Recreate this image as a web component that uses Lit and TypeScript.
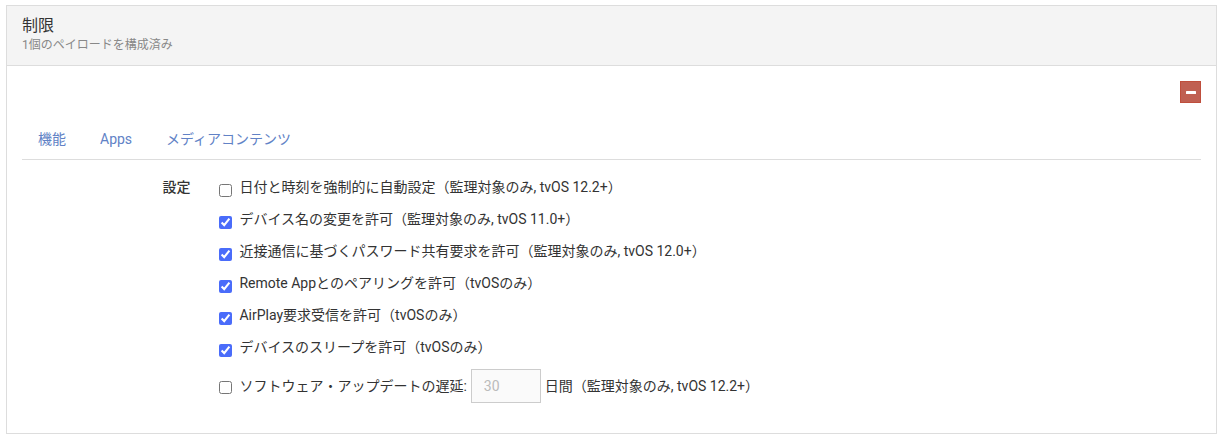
import { LitElement, html, css } from "lit";
import { customElement, state } from "lit/decorators.js";

interface Restriction {
  id: string;
  label: string;
  checked: boolean;
}

@customElement("app-root")
export class AppRoot extends LitElement {
  static styles = css`
    :host {
      display: block;
      padding: 5px 5px 4px 6px;
      color: #333;
      font: 14px/20px Roboto, "Noto Sans CJK JP", sans-serif;
    }
    * {
      box-sizing: border-box;
    }
    .panel {
      border: 1px solid #ddd;
      background: #fff;
    }
    .head {
      padding: 10px 15px 11px;
      background: #f4f4f4;
      border-bottom: 1px solid #ddd;
    }
    .title {
      margin: 0;
      font-size: 16px;
      font-weight: 400;
      line-height: 20px;
    }
    .subtitle {
      margin: 0;
      color: #888;
      font-size: 12px;
      line-height: 18px;
    }
    .body {
      padding: 15px 15px 30px;
    }
    .tools {
      display: flex;
      justify-content: flex-end;
    }
    .remove {
      display: flex;
      align-items: center;
      justify-content: center;
      width: 21px;
      height: 22px;
      padding: 0;
      color: #fff;
      background: #c06052;
      border: 1px solid #bf4e3c;
      cursor: pointer;
    }
    .tabs {
      display: flex;
      gap: 2px;
      margin-top: 16px;
      border-bottom: 1px solid #ddd;
    }
    .tab {
      padding: 10px 16px;
      color: #6182c6;
      text-decoration: none;
    }
    .settings {
      display: flex;
      gap: 29px;
      margin: 0;
      padding-top: 17px;
    }
    .name {
      width: calc(100% / 7);
      font-weight: 500;
      text-align: right;
    }
    .options {
      flex: 1;
      display: flex;
      flex-direction: column;
      gap: 12px;
    }
    .option {
      display: flex;
      gap: 7px;
    }
    .check {
      flex: none;
      width: 13px;
      height: 13px;
      margin: 7px 0 0;
      accent-color: #4a6cfa;
    }
    .delay {
      display: flex;
      align-items: center;
      gap: 4px;
    }
    .delay .check {
      margin: 3px 3px 0 0;
    }
    .days {
      width: 70px;
      height: 34px;
      padding: 6px 12px;
      color: #bbb;
      background: #fafafa;
      border: 1px solid #ccc;
      border-radius: 0;
      font: inherit;
    }
  `;

  @state() private delayed = false;

  private tabs = ["機能", "Apps", "メディアコンテンツ"];

  private restrictions: Restriction[] = [
    { id: "auto-date", label: "日付と時刻を強制的に自動設定（監理対象のみ, tvOS 12.2+）", checked: false },
    { id: "device-name", label: "デバイス名の変更を許可（監理対象のみ, tvOS 11.0+）", checked: true },
    { id: "proximity", label: "近接通信に基づくパスワード共有要求を許可（監理対象のみ, tvOS 12.0+）", checked: true },
    { id: "remote-app", label: "Remote Appとのペアリングを許可（tvOSのみ）", checked: true },
    { id: "airplay", label: "AirPlay要求受信を許可（tvOSのみ）", checked: true },
    { id: "sleep", label: "デバイスのスリープを許可（tvOSのみ）", checked: true },
  ];

  render() {
    return html`
      <section class="panel" lang="ja">
        <header class="head">
          <h1 class="title">制限</h1>
          <p class="subtitle">1個のペイロードを構成済み</p>
        </header>
        <div class="body">
          <div class="tools">
            <button class="remove" type="button" aria-label="削除">
              <svg width="10" height="3" viewBox="0 0 10 3" aria-hidden="true">
                <rect width="10" height="3" rx="0.5" fill="currentColor" />
              </svg>
            </button>
          </div>
          <nav class="tabs">
            ${this.tabs.map((t) => html`<a class="tab" href="#">${t}</a>`)}
          </nav>
          <div class="settings" role="group" aria-labelledby="settings-name">
            <div class="name" id="settings-name">設定</div>
            <div class="options">
              ${this.restrictions.map(
                (r) => html`<div class="option">
                  <input class="check" type="checkbox" id=${r.id} .checked=${r.checked} />
                  <label for=${r.id}>${r.label}</label>
                </div>`
              )}
              <div class="delay">
                <input
                  class="check"
                  type="checkbox"
                  id="delay"
                  .checked=${this.delayed}
                  @change=${(e: Event) => (this.delayed = (e.target as HTMLInputElement).checked)}
                />
                <label for="delay">ソフトウェア・アップデートの遅延:</label>
                <input class="days" type="text" id="days" value="30" ?disabled=${!this.delayed} />
                <label for="days">日間（監理対象のみ, tvOS 12.2+）</label>
              </div>
            </div>
          </div>
        </div>
      </section>
    `;
  }
}
